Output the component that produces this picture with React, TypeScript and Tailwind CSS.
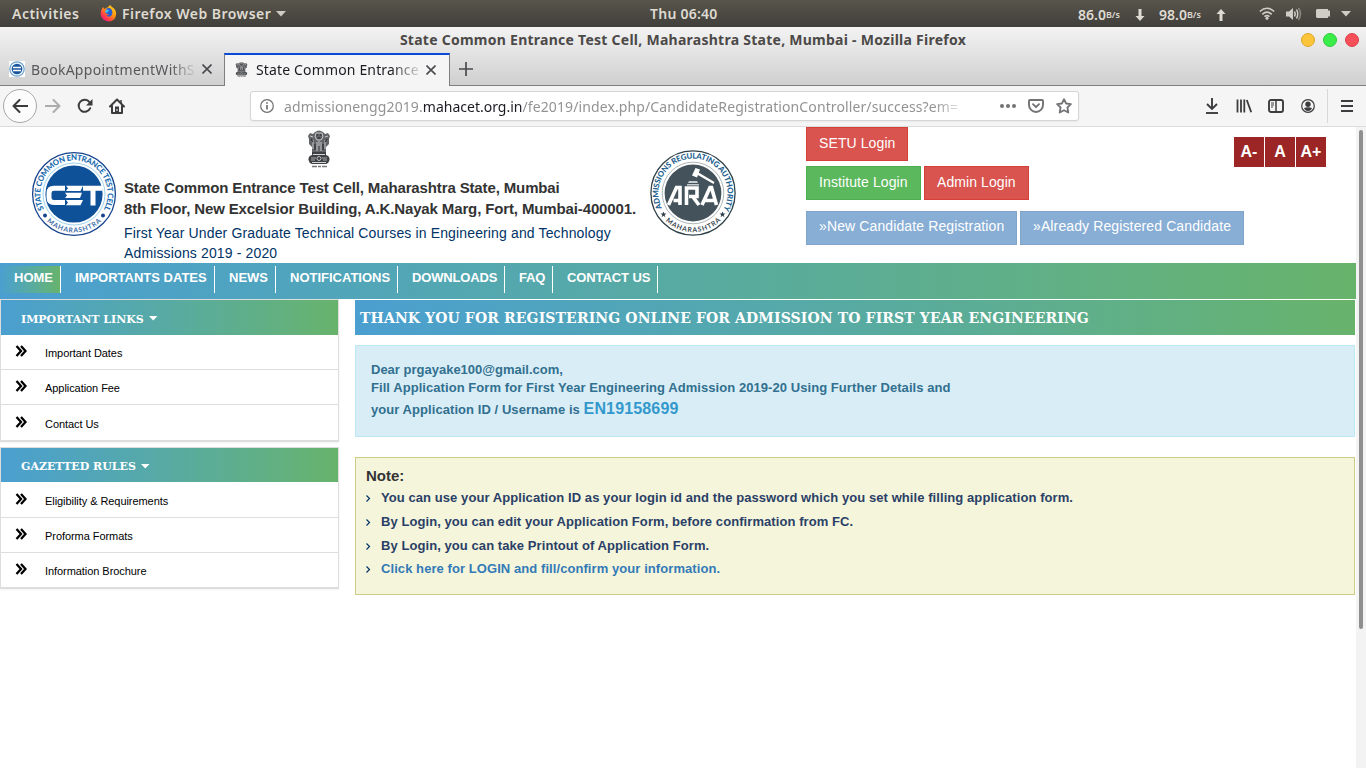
import React from "react";

const ubuntu = "font-['Noto_Sans','Open_Sans',sans-serif]";

function CetLogo() {
  return (
    <svg width="86" height="86" viewBox="0 0 86 86" className="block shrink-0">
      <defs>
        <path id="cetTop" d="M13.500 59 A33.600 33.600 0 1 1 72.500 59" />
        <path id="cetBottom" d="M8.500 60.500 A38.800 38.800 0 0 0 77.500 60.500" />
      </defs>
      <circle cx="43" cy="43" r="41.4" fill="#fff" stroke="#17448d" strokeWidth="1.3" />
      <circle cx="43" cy="43" r="31" fill="none" stroke="#9fd3ee" strokeWidth="1" />
      <circle cx="43" cy="43" r="28.6" fill="#0f5199" />
      <text fontFamily="Lato, sans-serif" fontWeight="900" fontSize="7.8" fill="#1a6cb0">
        <textPath href="#cetTop" textLength="137" startOffset="1">STATE COMMON ENTRANCE TEST CELL</textPath>
      </text>
      <text fontFamily="Lato, sans-serif" fontWeight="700" fontSize="6.8" fill="#3f6fa8">
        <textPath href="#cetBottom" textLength="60" startOffset="12.500">MAHARASHTRA</textPath>
      </text>
      <circle cx="14" cy="64.500" r="2" fill="#17448d" />
      <circle cx="72" cy="64.500" r="2" fill="#17448d" />
      <g fill="none" stroke="#fff" strokeWidth="5">
        <path d="M34 37.200H23Q18 37.200 18 42V46.500Q18 51.500 23 51.500H34" />
        <path d="M52 37.200H71M62 37V54.500" />
      </g>
      <g fill="#fff">
        <path d="M35 34.700H52L49.500 40H35L37 37.300ZM34 41.800H51L49 47H34L36 44.500ZM35 49H52L49.500 54.300H35L37 51.500Z" />
      </g>
    </svg>
  );
}

function AraLogo() {
  return (
    <svg width="88" height="88" viewBox="0 0 88 88" className="-ml-px block shrink-0">
      <defs>
        <path id="araTop" d="M13.400 60 A34.500 34.500 0 1 1 74.600 60" />
        <path id="araBottom" d="M9 62 A39.600 39.600 0 0 0 79 62" />
      </defs>
      <circle cx="44" cy="44" r="42.100" fill="#fff" stroke="#2f4048" strokeWidth="1.300" />
      <circle cx="44" cy="44" r="30.800" fill="none" stroke="#8b969b" strokeWidth="0.700" />
      <circle cx="44" cy="44" r="28.400" fill="#44535b" />
      <text fontFamily="Lato, sans-serif" fontWeight="900" fontSize="7.800" fill="#235f8f">
        <textPath href="#araTop" textLength="141" startOffset="1">ADMISSIONS REGULATING AUTHORITY</textPath>
      </text>
      <text fontFamily="Lato, sans-serif" fontWeight="700" fontSize="6.800" fill="#3b4a52">
        <textPath href="#araBottom" textLength="61" startOffset="12.500">MAHARASHTRA</textPath>
      </text>
      <path d="M0-3 .8-.9 3-.9 1.200.5 1.900 2.700 0 1.300-1.900 2.700-1.200.5-3-.9-.8-.9Z" transform="translate(14.500 65.500)" fill="#2f4048" />
      <path d="M0-3 .8-.9 3-.9 1.200.5 1.900 2.700 0 1.300-1.900 2.700-1.200.5-3-.9-.8-.9Z" transform="translate(73.500 65.500)" fill="#2f4048" />
      <path d="M46.500 19 51 20.500 48 28.500 43 26.500ZM49.500 23.500 65.500 33 64.500 35 48.500 25.800Z" fill="#fff" />
      <path d="M40 32H48L49 34H39ZM38 35H50V36.500H38Z" fill="#c5cccf" />
      <g fill="none" stroke="#fff" strokeWidth="3.600">
        <path d="M19.500 56 27.500 38.500H31V56M24.500 51.500H31" />
        <path d="M37.500 56V39H48V47.500H40M44 48 50 56" />
        <path d="M53 56 61 38.500H62.500L67.500 56M56 51.500H66" />
      </g>
    </svg>
  );
}

function Emblem({ className }: { className: string }) {
  return (
    <svg viewBox="0 0 24 38" preserveAspectRatio="none" className={className}>
      <path d="M8 2Q12-1 16 2L18 4 21 3 23 6 22 9 22 14 19 17 19 23H5V17L2 14 2 9 1 6 3 3 6 4Z" fill="#626367" />
      <path d="M9 3H15L16 7 14 10H10L8 7ZM3 6 6 7M21 6 18 7M6 10V19M18 10V19M10 12V21M14 12V21M12 11V16" stroke="#c9cacc" strokeWidth="1" fill="none" />
      <path d="M9.500 5H11M13 5H14.500M10.500 8H13.500M4 9 6 12M20 9 18 12M8 14V20M16 14V20" stroke="#222" strokeWidth="1" />
      <path d="M5 22H19L19 25Q23 26 22.500 30 22 33 19 34H5Q2 33 1.500 30 1 26 5 25Z" fill="#3e4043" />
      <path d="M6 24.500H18M5 32.500H19" stroke="#d4d5d6" strokeWidth="1" />
      <path d="M4 28H9M15 28H20M4 30H8M16 30H20" stroke="#aaa" strokeWidth="1" />
      <circle cx="12" cy="28.500" r="2" fill="none" stroke="#ddd" strokeWidth="0.800" />
      <path d="M5 36.500H10M11 36.500H14M15 36.500H20" stroke="#777" strokeWidth="1.500" />
    </svg>
  );
}

function Firefox() {
  return (
    <svg width="17" height="17" viewBox="0 0 17 17">
      <defs>
        <linearGradient id="fx" x1="1" y1="0" x2="0.200" y2="1">
          <stop offset="0" stopColor="#ffe226" />
          <stop offset="0.450" stopColor="#ff980e" />
          <stop offset="0.800" stopColor="#ff3750" />
          <stop offset="1" stopColor="#e31587" />
        </linearGradient>
      </defs>
      <path d="M3 2 4.500 4Q6 2.500 7.500 2.500L10 0Q12 2 14 3.500 16.500 6 16 10 15 16 8.500 16.500 1.500 16 .5 9 .5 5 3 2Z" fill="url(#fx)" />
      <path d="M6 4Q9 2 11.500 4.500 13.500 8 11 11 8.500 12.500 6.500 10.500L9 9.500 6 8.500 5.500 6.500 7.500 6Z" fill="#2a5fd0" />
      <path d="M7 4.500 9 5 8.500 6.500 6 8 5 6Z" fill="#3fc1f0" />
    </svg>
  );
}

function DesktopBar() {
  return (
    <div className={`flex h-[27px] items-center bg-linear-to-b from-[#59554c] to-[#403f3a] text-[14px] font-semibold text-[#dfdbd2] ${ubuntu}`}>
      <div className="w-[100px] pl-3"><span className="tracking-[0.500px]">Activities</span></div>
      <Firefox />
      <div className="ml-[5px] w-[154px] whitespace-nowrap"><span className="tracking-[0.470px]">Firefox Web Browser</span></div>
      <svg width="10" height="6" viewBox="0 0 10 6"><path d="M0 0H10L5 5.500Z" fill="#cfccc5" /></svg>
      <div className="ml-[364px] w-[428px] whitespace-nowrap"><span className="tracking-[0.250px]">Thu 06:40</span></div>
      <div className="flex w-[57px] items-center pt-[2px] leading-5"><span>86.0</span><span className="text-[9px] leading-4">B/s</span></div>
      <svg width="10" height="12" viewBox="0 0 10 12" className="mt-[3px]"><path d="M3.500 0H6.500V7H9.500L5 12 .5 7H3.500Z" fill="#dfdbd2" /></svg>
      <div className="ml-[14px] flex w-[57px] items-center pt-[2px] leading-5"><span>98.0</span><span className="text-[9px] leading-4">B/s</span></div>
      <svg width="10" height="12" viewBox="0 0 10 12" className="mt-[3px]"><path d="M3.500 12H6.500V5H9.500L5 0 .5 5H3.500Z" fill="#dfdbd2" /></svg>
      <svg width="16" height="13" viewBox="0 0 16 13" className="ml-[33px]">
        <g fill="none" stroke="#d0cdc6" strokeWidth="1.600"><path d="M.8 4.500Q8-2 15.200 4.500" /><path d="M3.300 7.300Q8 3 12.700 7.300" /><path d="M5.500 9.700Q8 7.500 10.500 9.700" /></g>
        <circle cx="8" cy="11.300" r="1.500" fill="#d0cdc6" />
      </svg>
      <svg width="16" height="14" viewBox="0 0 16 14" className="ml-[11px]">
        <path d="M0 4.500H3L7 1V13L3 9.500H0Z" fill="#d0cdc6" />
        <g fill="none" strokeWidth="1.500"><path d="M8.500 4.500Q10 7 8.500 9.500M10.500 2.500Q13 7 10.500 11.500" stroke="#d0cdc6" /><path d="M12.500 1Q16.500 7 12.500 13" stroke="#8b887f" /></g>
      </svg>
      <svg width="14" height="9" viewBox="0 0 14 9" className="ml-[14px]"><path d="M1 0H12V1.500H14V7.500H12V9H1L0 8V1Z" fill="#d0cdc6" /></svg>
      <svg width="10" height="6" viewBox="0 0 10 6" className="ml-[11px]"><path d="M0 0H10L5 5.500Z" fill="#cfccc5" /></svg>
    </div>
  );
}

function Cross() {
  return <svg width="10" height="10" viewBox="0 0 10 10" className="shrink-0"><path d="M.5 .5 9.500 9.500M9.500 .5 .5 9.500" stroke="#4a4a4f" strokeWidth="1.600" /></svg>;
}

function TitleAndTabs() {
  return (
    <div className={`flex h-[59px] flex-col bg-linear-to-b from-[#f3f3f3] to-[#cfcfcf] ${ubuntu}`}>
      <div className="flex h-[26px] items-center">
        <div className="flex flex-1 justify-center pl-[65px] text-[14px] font-bold whitespace-nowrap text-[#4c4948]"><span className="-mt-px tracking-[0.260px]">State Common Entrance Test Cell, Maharashtra State, Mumbai - Mozilla Firefox</span></div>
        <div className="flex w-[65px] gap-2">
          <i className="size-[14px] rounded-full border border-[#dfa82c] bg-[#fbc43a]" />
          <i className="size-[14px] rounded-full border border-[#33c93b] bg-[#3aed49]" />
          <i className="size-[14px] rounded-full border border-[#de4250] bg-[#f55058]" />
        </div>
      </div>
      <div className="flex h-[33px] text-[14px]">
        <div className="flex w-[224px] items-center border-b border-[#7f7f7f] pl-[9px]">
          <svg width="16" height="16" viewBox="0 0 16 16" className="shrink-0 bg-white">
            <circle cx="8" cy="8" r="7.200" fill="#eef6fb" stroke="#6aa1cf" strokeWidth="1.200" /><circle cx="8" cy="8" r="5.300" fill="#18559d" /><path d="M4 6.500H12M4 9.500H12" stroke="#fff" strokeWidth="1.300" />
          </svg>
          <div className="ml-[6px] w-[171px] overflow-hidden mask-[linear-gradient(to_right,#000_140px,transparent_166px)] whitespace-nowrap text-[#58575a]"><span className="tracking-[0.280px]">BookAppointmentWithS</span></div>
          <Cross />
        </div>
        <div className="flex w-[226px] items-center border-x border-t-2 border-x-[#7f7f7f] border-t-[#0a4ad8] bg-[#f5f5f5] pb-[2px] pl-[10px]">
          <Emblem className="h-[15px] w-[13px] shrink-0" />
          <div className="ml-2 w-[170px] overflow-hidden mask-[linear-gradient(to_right,#000_135px,transparent_168px)] whitespace-nowrap text-[#1c1b22]"><span className="tracking-[0.150px]">State Common Entrance</span></div>
          <Cross />
        </div>
        <div className="flex flex-1 items-center border-b border-[#7f7f7f] pl-[9px]">
          <svg width="14" height="14" viewBox="0 0 14 14"><path d="M7 0V14M0 7H14" stroke="#4a4a4f" strokeWidth="1.700" /></svg>
        </div>
      </div>
    </div>
  );
}

function Toolbar() {
  return (
    <div className={`flex h-[41px] items-center border-b border-[#dcdcdc] bg-[#f5f5f5] ${ubuntu}`}>
      <div className="ml-[3px] flex size-[34px] items-center justify-center rounded-full border border-[#a8a8a8] bg-[#fcfcfc]">
        <svg width="16" height="14" viewBox="0 0 16 14"><path d="M7.500 1 1.500 7 7.500 13M1.500 7H15.500" fill="none" stroke="#3c3c3e" strokeWidth="2" strokeLinecap="round" strokeLinejoin="round" /></svg>
      </div>
      <svg width="16" height="14" viewBox="0 0 16 14" className="ml-2"><path d="M8.500 1 14.500 7 8.500 13M14.500 7H.5" fill="none" stroke="#adadad" strokeWidth="2" strokeLinecap="round" strokeLinejoin="round" /></svg>
      <svg width="16" height="16" viewBox="0 0 16 16" className="ml-4"><path d="M13.200 10.200A6 6 0 1 1 12.500 4.200" fill="none" stroke="#3c3c3e" strokeWidth="2" strokeLinecap="round" /><path d="M15.500 1V7.500H9Z" fill="#3c3c3e" /></svg>
      <svg width="16" height="16" viewBox="0 0 16 16" className="ml-4"><path d="M1 8.500 8 1.500 15 8.500M3 8V15H13V8" fill="none" stroke="#3c3c3e" strokeWidth="2" strokeLinecap="round" strokeLinejoin="round" /><path d="M6 8.500H10V15H6Z" fill="#3c3c3e" /><path d="M8 11V13" stroke="#fff" strokeWidth="1" /><path d="M12 2V5" stroke="#3c3c3e" strokeWidth="1.500" /></svg>
      <div className="ml-[125px] flex h-[30px] w-[829px] items-center rounded-[3px] border border-[#d5d5d5] bg-white pl-[9px] shadow-xs">
        <svg width="14" height="14" viewBox="0 0 14 14"><circle cx="7" cy="7" r="6.300" fill="none" stroke="#6f6f72" strokeWidth="1.200" /><path d="M7 6V10.500M7 3.200V4.800" stroke="#6f6f72" strokeWidth="1.700" /></svg>
        <div className="ml-[10px] w-[684px] overflow-hidden mask-[linear-gradient(to_right,#000_650px,transparent_684px)] text-[14px] whitespace-nowrap text-[#939395]"><span className="tracking-[0.110px]">admissionengg2019.<span className="tracking-[0px] text-[#1c1b22]">mahacet.org.in</span>/fe2019/index.php/CandidateRegistrationController/success?em=</span></div>
        <svg width="16" height="4" viewBox="0 0 16 4" className="ml-8" fill="#737376"><circle cx="2" cy="2" r="2" /><circle cx="8" cy="2" r="2" /><circle cx="14" cy="2" r="2" /></svg>
        <svg width="16" height="14" viewBox="0 0 16 14" className="ml-3"><path d="M2 1H14Q15 1 15 2V6A7 7 0 0 1 1 6V2Q1 1 2 1Z" fill="none" stroke="#737376" strokeWidth="1.900" /><path d="M5 5.200 8 8.200 11 5.200" fill="none" stroke="#737376" strokeWidth="1.900" strokeLinecap="round" strokeLinejoin="round" /></svg>
        <svg width="16" height="16" viewBox="0 0 16 16" className="ml-3"><path d="M8 1.200 10.100 5.500 14.900 6.200 11.400 9.500 12.300 14.500 8 12.200 3.700 14.500 4.600 9.500 1.100 6.200 5.900 5.500Z" fill="none" stroke="#737376" strokeWidth="1.800" strokeLinejoin="round" /></svg>
      </div>
      <div className="ml-[127px] flex items-center">
        <svg width="12" height="16" viewBox="0 0 12 16"><path d="M6 0V10M1 6 6 11 11 6" fill="none" stroke="#3c3c3e" strokeWidth="1.900" /><path d="M0 15H12" stroke="#3c3c3e" strokeWidth="1.900" /></svg>
        <svg width="16" height="14" viewBox="0 0 16 14" className="ml-[18px]"><path d="M1.500 .5V13.500M5 .5V13.500M8.300 .5V13.500M10.800 1 15.200 13.300" stroke="#3c3c3e" strokeWidth="1.800" /></svg>
        <svg width="16" height="14" viewBox="0 0 16 14" className="ml-4"><rect x="1" y="1" width="14" height="12" rx="2" fill="none" stroke="#3c3c3e" strokeWidth="1.900" /><path d="M8 1V13" stroke="#3c3c3e" strokeWidth="1.500" /><path d="M3 4H6M3 6H6M3 8H5" stroke="#3c3c3e" strokeWidth="1" /></svg>
        <svg width="14" height="14" viewBox="0 0 14 14" className="ml-[17px]"><circle cx="7" cy="7" r="6.300" fill="none" stroke="#3c3c3e" strokeWidth="1.200" /><circle cx="7" cy="5.300" r="2.700" fill="#3c3c3e" /><path d="M3 9Q7 7.500 11 9 10 12 7 12 4 12 3 9Z" fill="#3c3c3e" /></svg>
        <div className="ml-3 h-[34px] w-px bg-[#d8d8d8]" />
        <svg width="12" height="12" viewBox="0 0 12 12" className="ml-[13px]"><path d="M0 1H12M0 6H12M0 11H12" stroke="#3c3c3e" strokeWidth="1.900" /></svg>
      </div>
    </div>
  );
}

function Btn({ tone, children }: { tone: string; children: React.ReactNode }) {
  return <button className={`flex h-[34px] shrink-0 items-center border pl-3 text-[14px] whitespace-nowrap text-white ${tone}`}>{children}</button>;
}

function Header() {
  return (
    <div className="flex h-[136px]">
      <div className="w-[124px] pt-[24px] pl-[31px]"><CetLogo /></div>
      <div className="w-[526px]">
        <Emblem className="mt-[3px] ml-[183px] h-[38px] w-6" />
        <div className="mt-[9px] text-[15px] leading-[21px] font-bold tracking-[-0.130px] whitespace-nowrap text-[#333]"><div><span>State Common Entrance Test Cell, Maharashtra State, Mumbai</span></div><div><span>8th Floor, New Excelsior Building, A.K.Nayak Marg, Fort, Mumbai-400001.</span></div></div>
        <div className="mt-1 text-[14px] leading-5 tracking-[0.140px] text-[#036]"><div><span>First Year Under Graduate Technical Courses in Engineering and Technology</span></div><div><span>Admissions 2019 - 2020</span></div></div>
      </div>
      <div className="w-[156px] pt-[22px]"><AraLogo /></div>
      <div className="flex w-[428px] flex-col">
        <div className="flex"><Btn tone="w-[102px] pb-px bg-[#d9534f] border-[#d43f3a] tracking-[0.100px]">SETU Login</Btn></div>
        <div className="mt-[5px] flex gap-[3px]"><Btn tone="w-[115px] pb-px bg-[#5cb85c] border-[#4cae4c] tracking-[0.100px]">Institute Login</Btn><Btn tone="w-[105px] pb-px bg-[#d9534f] border-[#d43f3a] tracking-[0.080px]">Admin Login</Btn></div>
        <div className="mt-[11px] flex gap-[3px]"><Btn tone="w-[211px] pb-[3px] bg-[#88aed5] border-[#7fa5cb] tracking-[0.120px]">»New Candidate Registration</Btn><Btn tone="w-[224px] pb-[3px] bg-[#88aed5] border-[#7fa5cb] tracking-[0.120px]">»Already Registered Candidate</Btn></div>
      </div>
      <div className="flex gap-px pt-[10px] text-base font-bold text-white">
        {["A-", "A", "A+"].map((t) => <div key={t} className="flex h-[30px] w-[30px] items-center justify-center bg-[#9c2626]">{t}</div>)}
      </div>
    </div>
  );
}

const nav: [string, string][] = [
  ["HOME", "w-[61px] bg-linear-to-r from-[#4b9fd0] to-[#68b36b]"],
  ["IMPORTANTS DATES", "w-[154px]"],
  ["NEWS", "w-[61px]"],
  ["NOTIFICATIONS", "w-[122px]"],
  ["DOWNLOADS", "w-[107px] tracking-[-0.150px]"],
  ["FAQ", "w-[48px] tracking-[-0.200px]"],
  ["CONTACT US", "w-[105px] tracking-[-0.100px]"],
];

interface PanelProps {
  title: string;
  items: [string, string, string][];
  head: string;
}

function Panel({ title, items, head }: PanelProps) {
  return (
    <div className="border border-b-2 border-[#ddd] shadow-xs">
      <div className={`flex items-center bg-linear-to-r from-[#4b9fd0] to-[#68b36b] pl-5 font-['DejaVu_Serif',serif] text-[11px] font-bold text-white ${head}`}>
        <span className="pt-[5px]">{title}</span>
        <svg width="9" height="5" viewBox="0 0 9 5" className="mt-[2px] ml-[5px]"><path d="M0 0H8.500L4.250 4.500Z" fill="#fff" /></svg>
      </div>
      {items.map(([t, row, pad]) => (
        <div key={t} className={`flex border-[#ddd] pl-[14px] text-[11px] tracking-[-0.060px] text-black ${row} ${pad}`}>
          <svg width="12" height="12" viewBox="0 0 12 12"><path d="M1.500 1 6 6 1.500 11M6 1 10.500 6 6 11" fill="none" stroke="#000" strokeWidth="2.300" /></svg>
          <span className="ml-[18px] leading-4">{t}</span>
        </div>
      ))}
    </div>
  );
}

const notes = [
  "You can use your Application ID as your login id and the password which you set while filling application form.",
  "By Login, you can edit your Application Form, before confirmation from FC.",
  "By Login, you can take Printout of Application Form.",
  "Click here for LOGIN and fill/confirm your information.",
];

export default function App() {
  return (
    <div className="flex h-[768px] w-[1366px] flex-col overflow-hidden bg-white font-['Liberation_Sans',Arial,sans-serif]">
      <DesktopBar />
      <TitleAndTabs />
      <Toolbar />
      <div className="flex flex-1">
        <div className="w-[1356px]">
          <Header />
          <nav className="flex h-9 bg-linear-to-r from-[#4b9fd0] to-[#68b36b] pt-[3px] text-[13px] leading-6 font-bold text-white">
            {nav.map(([t, c]) => <a key={t} className={`h-[27px] border-r border-white pl-[14px] whitespace-nowrap ${c}`}>{t}</a>)}
          </nav>
          <div className="flex gap-4">
            <aside className="flex w-[339px] flex-col gap-[5px]">
              <Panel title="IMPORTANT LINKS" head="h-[35px]" items={[["Important Dates", "h-[35px] border-b", "pt-[10px]"], ["Application Fee", "h-[35px] border-b", "pt-[10px]"], ["Contact Us", "h-[35px]", "pt-[11px]"]]} />
              <Panel title="GAZETTED RULES" head="h-[34px]" items={[["Eligibility & Requirements", "h-[36px] border-b", "pt-[11px]"], ["Proforma Formats", "h-[35px] border-b", "pt-[10px]"], ["Information Brochure", "h-[34px]", "pt-[10px]"]]} />
            </aside>
            <main className="w-[1000px] pt-px">
              <h1 className="flex h-[35px] items-center bg-linear-to-r from-[#4b9fd0] to-[#68b36b] pt-[2px] pl-[5px] font-['DejaVu_Serif',serif] text-[14px] font-bold tracking-[0.125px] whitespace-nowrap text-white"><span>THANK YOU FOR REGISTERING ONLINE FOR ADMISSION TO FIRST YEAR ENGINEERING</span></h1>
              <section className="mt-[10px] h-[92px] border border-[#bce8f1] bg-[#d9edf7] px-[15px] pt-[15px] text-[13px] leading-[18px] font-bold tracking-[0.062px] text-[#31708f]">
                <p><span className="tracking-[0px]">Dear prgayake100@gmail.com,</span></p>
                <p><span>Fill Application Form for First Year Engineering Admission 2019-20 Using Further Details and</span></p>
                <p className="leading-[23px]"><span>your Application ID / Username is </span><span className="text-base leading-[23px] tracking-[0.150px] text-[#3399cc]">EN19158699</span></p>
              </section>
              <section className="mt-5 h-[138px] border border-[#cccc88] bg-[#f5f5dc] px-[10px] pt-2 font-bold">
                <h2 className="text-[15px] leading-5 text-[#333]"><span>Note:</span></h2>
                <ul className="text-[13px] tracking-[0.072px] text-[#2a3f66]">
                  {notes.map((n, i) => (
                    <li key={n} className={`flex h-[24px] items-center ${i === 3 ? "-mt-px text-[#337ab7]" : ""}`}>
                      <svg width="5" height="7" viewBox="0 0 5 7" className="mt-px mr-[10px]"><path d="M.5 .5 3.500 3.500 .5 6.500" fill="none" stroke="#036" strokeWidth="1.200" /></svg>
                      <span>{n}</span>
                    </li>
                  ))}
                </ul>
              </section>
            </main>
          </div>
        </div>
        <div className="w-[10px] bg-[#f3f3f3] pt-[3px] pl-[3px]"><div className="h-[499px] w-1 rounded-full bg-[#8f8f8f]" /></div>
      </div>
    </div>
  );
}
